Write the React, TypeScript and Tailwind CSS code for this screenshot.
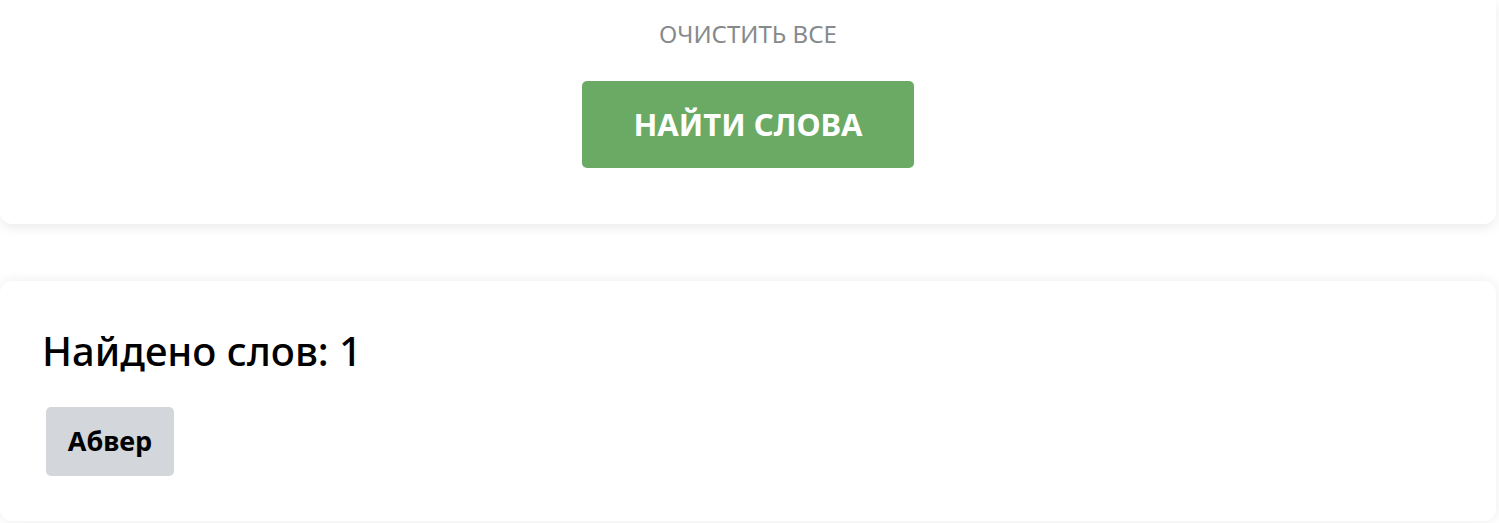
export default function App(): React.ReactElement {
  return (
    <div className="min-h-screen bg-white font-['Noto_Sans',sans-serif] text-black">
      <div className="flex w-[1496px] flex-col gap-[57px]">
        <section className="flex flex-col items-center rounded-b-xl bg-white pb-[56px] pt-[18px] shadow-[0_4px_12px_rgba(0,0,0,0.08)]">
          <button className="text-[24px] uppercase leading-[32px] text-[#878a8c]">Очистить все</button>
          <button className="mt-[31px] flex h-[87px] w-[332px] items-center justify-center rounded-[5px] bg-[#6aaa64] text-[31px] font-bold uppercase text-white">
            Найти слова
          </button>
        </section>
        <section className="rounded-xl bg-white px-[42px] pb-[45px] pt-[45px] shadow-[0_0_12px_rgba(0,0,0,0.08)]">
          <h2 className="text-[40px] font-medium leading-[50px]">Найдено слов: 1</h2>
          <div className="mt-[31px] flex flex-wrap gap-2 pl-[4px]">
            <span className="flex h-[69px] w-[128px] items-center justify-center rounded-[5px] bg-[#d3d6da] text-[27px] font-bold">
              Абвер
            </span>
          </div>
        </section>
      </div>
    </div>
  );
}
